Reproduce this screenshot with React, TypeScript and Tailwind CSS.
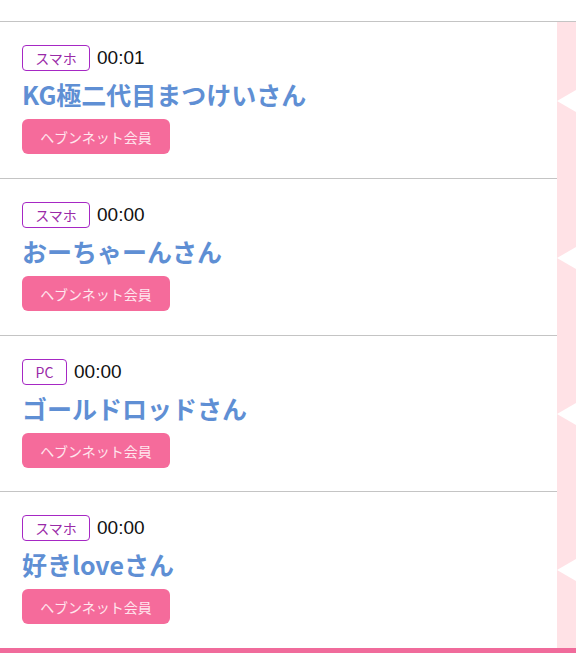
import React from "react";

const rows = [
  { tag: "スマホ", time: "00:01", name: "KG極二代目まつけいさん", h: "h-[157px]", line: true },
  { tag: "スマホ", time: "00:00", name: "おーちゃーんさん", h: "h-[157px]", line: true },
  { tag: "PC", time: "00:00", name: "ゴールドロッドさん", h: "h-[156px]", line: true },
  { tag: "スマホ", time: "00:00", name: "好きloveさん", h: "h-[156px]", line: false },
];

export default function App() {
  return (
    <div
      className="w-[576px] h-[653px] bg-white overflow-hidden flex flex-col"
      style={{ fontFamily: '"Noto Sans CJK JP", "Noto Sans", sans-serif' }}
    >
      <div className="h-[22px] shrink-0 border-b border-[#c4c4c4]" />
      <div className="flex shrink-0">
        <div className="flex-1 flex flex-col">
          {rows.map((r, i) => (
            <div
              key={i}
              className={`${r.h} shrink-0 pl-[22px] pt-[23px] flex flex-col ${r.line ? "border-b border-[#c4c4c4]" : ""}`}
            >
              <div className="flex items-center h-[26px]">
                <span
                  className={`h-[26px] flex items-center justify-center border-[1.5px] border-[#a628c4] rounded-[4px] text-[14px] text-[#9a2aa8] leading-none ${r.tag === "PC" ? "w-[45px]" : "w-[68px]"}`}
                >
                  {r.tag}
                </span>
                <span className="ml-[7px] -mt-[2px] text-[19px] text-[#111] leading-none font-light" style={{ fontFamily: '"Liberation Sans", sans-serif' }}>{r.time}</span>
              </div>
              <div className="mt-[5px] h-[36px] flex items-center text-[25px] font-bold text-[#5f8fd4] leading-none whitespace-nowrap">
                <span>{r.name}</span>
              </div>
              <div className="mt-[7px]">
                <span className="inline-flex items-center justify-center w-[148px] h-[35px] rounded-[6px] bg-[#f56b9b] text-[14px] text-[#ffe6ee] leading-none">
                  ヘブンネット会員
                </span>
              </div>
            </div>
          ))}
        </div>
        <div className="w-[19px] bg-[#ffe2e6] flex flex-col">
          {rows.map((r, i) => (
            <div key={i} className={`${r.h} shrink-0 flex items-center`}>
              <svg width="19" height="22" viewBox="0 0 19 22">
                <polygon points="0,11 19,0 19,22" fill="#ffffff" />
              </svg>
            </div>
          ))}
        </div>
      </div>
      <div className="h-[5px] shrink-0 bg-[#f06b9b]" />
    </div>
  );
}
